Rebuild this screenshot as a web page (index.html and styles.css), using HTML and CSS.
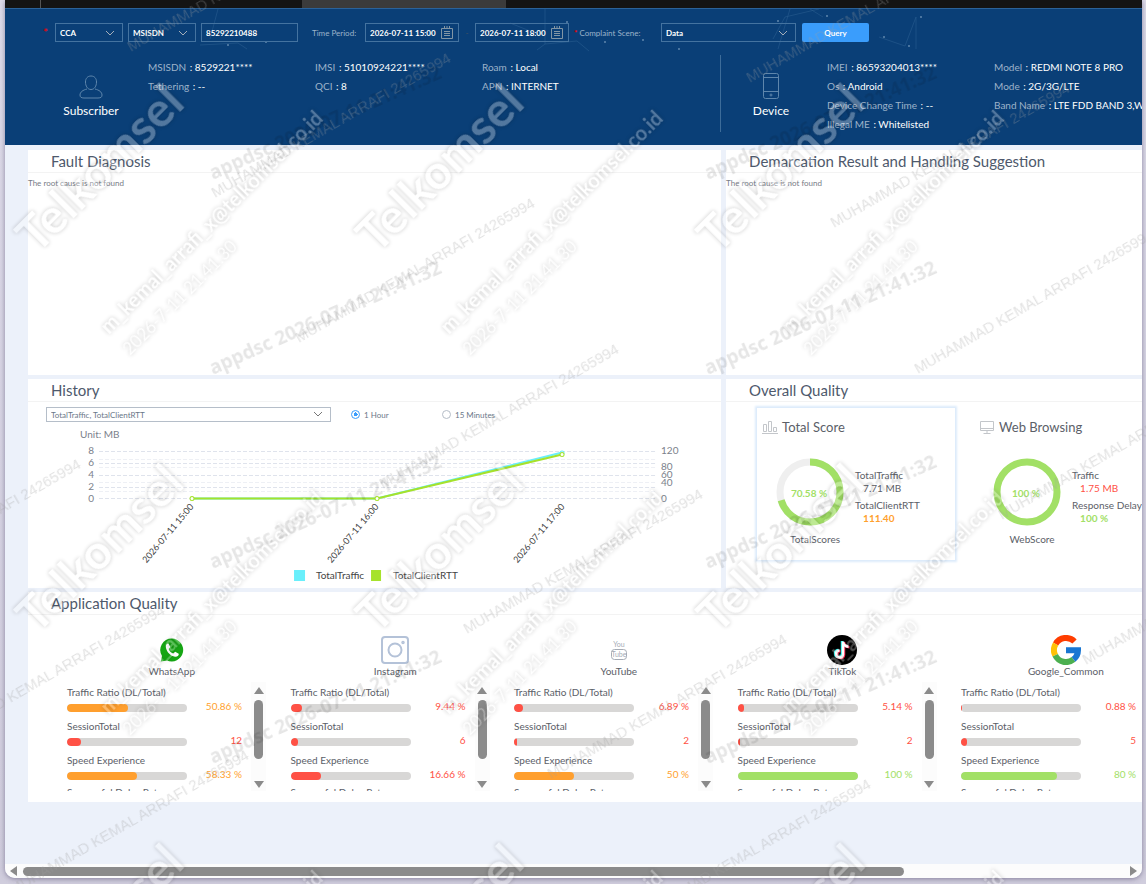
FILE: index.html
```html
<!DOCTYPE html>
<html lang="en">
<head>
    <meta charset="UTF-8">
    <meta name="viewport" content="width=device-width, initial-scale=1.0">
    <title>Customer Complaint Analysis</title>
    <link rel="stylesheet" href="styles.css">
</head>
<body>
    <div class="window">
        <div class="tabs">
            <div class="tab tab-first"></div>
            <div class="tab tab-wide"></div>
            <div class="tab tab-active"></div>
        </div>

        <div class="viewport">
            <div class="page">
                <header class="header">
                    <svg class="stars" width="940" height="50" viewBox="0 0 940 50">
                        <g fill="none" stroke="#2d6294" stroke-opacity=".5">
                            <path d="M195 36l38-2 9 6M213 0l-8 30M540 35l32-3 12 10M540 0v35l-8 6M505 14l20 8M768 30l12-22 34-8M874 28l26 9 11-29v32M818 8l-13-8M785 0l-12 40"/>
                        </g>
                        <g fill="#5f87ad">
                            <circle cx="223" cy="36" r="1"/><circle cx="261" cy="33" r="1"/>
                            <circle cx="562" cy="13" r="1"/><circle cx="600" cy="33" r="1"/><circle cx="638" cy="31" r="1"/><circle cx="674" cy="40" r="1"/>
                            <circle cx="773" cy="12" r="1"/><circle cx="822" cy="7" r="1"/><circle cx="879" cy="28" r="1"/><circle cx="904" cy="37" r="1"/><circle cx="916" cy="8" r="1"/>
                        </g>
                    </svg>

                    <form class="query">
                        <span class="star">*</span>
                        <span class="pick w68">
                            <select aria-label="Domain"><option>CCA</option></select>
                            <svg width="10" height="6" viewBox="0 0 10 6"><path d="M1 1l4 4 4-4"/></svg>
                        </span>
                        <span class="pick w68">
                            <select aria-label="Number type"><option>MSISDN</option></select>
                            <svg width="10" height="6" viewBox="0 0 10 6"><path d="M1 1l4 4 4-4"/></svg>
                        </span>
                        <input class="number" type="text" value="85292210488" aria-label="Number">
                        <label class="time-label" for="from">Time Period:</label>
                        <span class="date">
                            <input id="from" type="text" value="2026-07-11 15:00">
                            <svg width="12" height="13" viewBox="0 0 12 13"><path d="M.5 2.500h11v10H.5zM3.500 0v3M6 0v3M8.500 0v3M3 5.500h6M3 7.500h6M3 9.500h6"/></svg>
                        </span>
                        <span class="dash">-</span>
                        <span class="date">
                            <input id="to" type="text" value="2026-07-11 18:00" aria-label="End time">
                            <svg width="12" height="13" viewBox="0 0 12 13"><path d="M.5 2.500h11v10H.5zM3.500 0v3M6 0v3M8.500 0v3M3 5.500h6M3 7.500h6M3 9.500h6"/></svg>
                        </span>
                        <label class="scene-label" for="scene"><b>*</b> Complaint Scene:</label>
                        <span class="pick w135">
                            <select id="scene"><option>Data</option></select>
                            <svg width="10" height="6" viewBox="0 0 10 6"><path d="M1 1l4 4 4-4"/></svg>
                        </span>
                        <button class="query-btn" type="button">Query</button>
                    </form>

                    <div class="info">
                        <section class="info-half subscriber">
                            <div class="who">
                                <svg width="24" height="24" viewBox="0 0 24 24"><path d="M12 1c-3.500 0-5.500 2.500-5.500 6 0 4 2 7.500 5.500 7.500s5.500-3.500 5.500-7.500c0-3.500-2-6-5.500-6zM8 14c-4 1-7 3-7 6 0 2 1 3 4 3h14c3 0 4-1 4-3 0-3-3-5-7-6"/></svg>
                                <h2>Subscriber</h2>
                            </div>
                            <ul>
                                <li>MSISDN <b>: 8529221****</b></li>
                                <li>Tethering <b>: --</b></li>
                            </ul>
                            <ul>
                                <li>IMSI <b>: 51010924221****</b></li>
                                <li>QCI <b>: 8</b></li>
                            </ul>
                            <ul>
                                <li>Roam <b>: Local</b></li>
                                <li>APN <b>: INTERNET</b></li>
                            </ul>
                        </section>
                        <section class="info-half device">
                            <div class="who">
                                <svg width="16" height="26" viewBox="0 0 16 26"><rect x=".5" y=".5" width="15" height="25" rx="2"/><path d="M.5 4.500h15M.5 18.500h15"/><circle cx="8" cy="22" r="1"/></svg>
                                <h2>Device</h2>
                            </div>
                            <ul>
                                <li>IMEI <b>: 86593204013****</b></li>
                                <li>Os <b>: Android</b></li>
                                <li>Device Change Time <b>: --</b></li>
                                <li>Illegal ME <b>: Whitelisted</b></li>
                            </ul>
                            <ul>
                                <li>Model <b>: REDMI NOTE 8 PRO</b></li>
                                <li>Mode <b>: 2G/3G/LTE</b></li>
                                <li>Band Name <b>: LTE FDD BAND 3,WCDMA</b></li>
                            </ul>
                        </section>
                    </div>
                </header>

                <main class="board">
                    <section class="card diagnosis">
                        <h3>Fault Diagnosis</h3>
                        <p>The root cause is not found</p>
                    </section>
                    <section class="card diagnosis">
                        <h3>Demarcation Result and Handling Suggestion</h3>
                        <p>The root cause is not found</p>
                    </section>

                    <section class="card history">
                        <h3>History</h3>
                        <div class="filters">
                            <span class="pick light">
                                <select aria-label="Indicators"><option>TotalTraffic, TotalClientRTT</option></select>
                                <svg width="10" height="6" viewBox="0 0 10 6"><path d="M1 1l4 4 4-4"/></svg>
                            </span>
                            <label><input type="radio" name="step" checked> 1 Hour</label>
                            <label><input type="radio" name="step"> 15 Minutes</label>
                        </div>
                        <svg class="chart" viewBox="0 0 693 165">
                            <text class="axis" x="52" y="14">Unit: MB</text>
                            <g class="grid">
                                <path d="M71 27.500h557M71 39.500h557M71 51.500h557M71 63.500h557M71 74.500h557"/>
                                <path class="faint" d="M71 35.500h557M71 43.500h557M71 58.500h557M71 67.500h557"/>
                            </g>
                            <g class="axis" text-anchor="end">
                                <text x="66" y="30">8</text>
                                <text x="66" y="42">6</text>
                                <text x="66" y="54">4</text>
                                <text x="66" y="66">2</text>
                                <text x="66" y="78">0</text>
                            </g>
                            <g class="axis">
                                <text x="633" y="30">120</text>
                                <text x="633" y="46">80</text>
                                <text x="633" y="54">60</text>
                                <text x="633" y="62">40</text>
                                <text x="633" y="78">0</text>
                            </g>
                            <path class="line cyan" d="M164 74.500h185l185-46"/>
                            <circle class="dot cyan" cx="534" cy="29" r="2"/>
                            <path class="line green" d="M164 74.500h185l185-44"/>
                            <circle class="dot green" cx="164" cy="74.500" r="2"/>
                            <circle class="dot green" cx="349" cy="74.500" r="2"/>
                            <circle class="dot green" cx="534" cy="30.500" r="2"/>
                            <g class="times" text-anchor="end">
                                <text transform="translate(166 83) rotate(-50)">2026-07-11 15:00</text>
                                <text transform="translate(351 83) rotate(-50)">2026-07-11 16:00</text>
                                <text transform="translate(537 83) rotate(-50)">2026-07-11 17:00</text>
                            </g>
                            <rect x="266" y="146" width="11" height="11" fill="#69effb"/>
                            <text class="legend" x="288" y="155">TotalTraffic</text>
                            <rect x="343" y="146" width="10" height="11" fill="#a6e22c"/>
                            <text class="legend" x="365" y="155">TotalClientRTT</text>
                        </svg>
                    </section>

                    <section class="card overall">
                        <h3>Overall Quality</h3>
                        <div class="scores">
                            <article class="score selected">
                                <h4>
                                    <svg width="16" height="13" viewBox="0 0 16 13"><path d="M0 12.500h16M1.500 10.500v-7h3v7zM6.500 10.500V.5h3v10zM11.500 10.500v-4h3v4z"/></svg>
                                    Total Score
                                </h4>
                                <div class="score-body">
                                    <figure>
                                        <svg width="68" height="68" viewBox="0 0 68 68">
                                            <circle class="ring-bg" cx="34" cy="34" r="30"/>
                                            <circle class="ring" cx="34" cy="34" r="30" pathLength="100" stroke-dasharray="70.58 100" transform="rotate(-90 34 34)"/>
                                            <text x="33" y="39" text-anchor="middle">70.58 %</text>
                                        </svg>
                                        <figcaption>TotalScores</figcaption>
                                    </figure>
                                    <dl>
                                        <dt>TotalTraffic</dt>
                                        <dd>7.71 MB</dd>
                                        <dt>TotalClientRTT</dt>
                                        <dd class="orange strong">111.40</dd>
                                    </dl>
                                </div>
                            </article>
                            <article class="score">
                                <h4>
                                    <svg width="16" height="13" viewBox="0 0 16 13"><path d="M1.500.5h13v9h-13zM1.500 7.500h13M8 9.500v3M4.500 12.500h7"/></svg>
                                    Web Browsing
                                </h4>
                                <div class="score-body">
                                    <figure>
                                        <svg width="68" height="68" viewBox="0 0 68 68">
                                            <circle class="ring" cx="34" cy="34" r="30"/>
                                            <text x="33" y="39" text-anchor="middle">100 %</text>
                                        </svg>
                                        <figcaption>WebScore</figcaption>
                                    </figure>
                                    <dl>
                                        <dt>Traffic</dt>
                                        <dd class="red">1.75 MB</dd>
                                        <dt>Response Delay</dt>
                                        <dd class="green strong">100 %</dd>
                                    </dl>
                                </div>
                            </article>
                        </div>
                    </section>

                    <section class="card apps">
                        <h3>Application Quality</h3>
                        <div class="app-list">
                            <article class="app">
                                <svg width="30" height="30" viewBox="0 0 30 30">
                                    <path fill="#16a614" d="M15 3.500a11.500 11.500 0 1 1-5 22L3.800 26.500 5 21A11.500 11.500 0 0 1 15 3.500z"/>
                                    <path fill="#fff" d="M11.500 8.500c-1-.5-3 1-2.700 3.500.6 5 5 9.300 9.200 9.700 2.500.2 4.200-1.700 3.700-3l-3.500-2-2 1.800c-2.200-.8-3.800-2.500-4.500-4.500l1.600-2z"/>
                                </svg>
                                <h5>WhatsApp</h5>
                                <div class="metrics">
                                    <ul>
                                        <li>Traffic Ratio (DL/Total)<div class="row"><i class="bar"><i class="bg-orange" style="width:50.86%"></i></i><span class="orange">50.86 %</span></div></li>
                                        <li>SessionTotal<div class="row"><i class="bar"><i class="bg-red" style="width:12%"></i></i><span class="red">12</span></div></li>
                                        <li>Speed Experience<div class="row"><i class="bar"><i class="bg-orange" style="width:58.33%"></i></i><span class="orange">58.33 %</span></div></li>
                                        <li>Successful Delay Rate</li>
                                    </ul>
                                    <div class="vbar"><i class="up"></i><i class="thumb"></i><i class="down"></i></div>
                                </div>
                            </article>
                            <article class="app">
                                <svg width="30" height="30" viewBox="0 0 30 30" fill="none" stroke="#b4c2d8" stroke-width="2">
                                    <rect x="2" y="2" width="26" height="26" rx="3"/>
                                    <circle cx="15" cy="15" r="6.500"/>
                                    <circle cx="23" cy="7.500" r="1" stroke-width="1.500"/>
                                </svg>
                                <h5>Instagram</h5>
                                <div class="metrics">
                                    <ul>
                                        <li>Traffic Ratio (DL/Total)<div class="row"><i class="bar"><i class="bg-red" style="width:9.44%"></i></i><span class="red">9.44 %</span></div></li>
                                        <li>SessionTotal<div class="row"><i class="bar"><i class="bg-red" style="width:6%"></i></i><span class="red">6</span></div></li>
                                        <li>Speed Experience<div class="row"><i class="bar"><i class="bg-red" style="width:25%"></i></i><span class="red">16.66 %</span></div></li>
                                        <li>Successful Delay Rate</li>
                                    </ul>
                                    <div class="vbar"><i class="up"></i><i class="thumb"></i><i class="down"></i></div>
                                </div>
                            </article>
                            <article class="app">
                                <svg class="youtube" width="30" height="30" viewBox="0 0 30 30">
                                    <text x="15" y="12" text-anchor="middle">You</text>
                                    <rect x="7.500" y="14.500" width="15" height="10" rx="3"/>
                                    <text x="15" y="22" text-anchor="middle">Tube</text>
                                </svg>
                                <h5>YouTube</h5>
                                <div class="metrics">
                                    <ul>
                                        <li>Traffic Ratio (DL/Total)<div class="row"><i class="bar"><i class="bg-red" style="width:7.500%"></i></i><span class="red">6.89 %</span></div></li>
                                        <li>SessionTotal<div class="row"><i class="bar"><i class="bg-red" style="width:2.500%"></i></i><span class="red">2</span></div></li>
                                        <li>Speed Experience<div class="row"><i class="bar"><i class="bg-orange" style="width:50%"></i></i><span class="orange">50 %</span></div></li>
                                        <li>Successful Delay Rate</li>
                                    </ul>
                                    <div class="vbar"><i class="up"></i><i class="thumb"></i><i class="down"></i></div>
                                </div>
                            </article>
                            <article class="app">
                                <svg width="30" height="30" viewBox="0 0 30 30">
                                    <circle cx="15" cy="15" r="15" fill="#000"/>
                                    <g fill="none" stroke-width="2.500">
                                        <path stroke="#25f4ee" d="M15 6v13a3.500 3.500 0 1 1-3.500-4M15 6.500c.5 3 2.500 4.500 5.500 4.700"/>
                                        <path stroke="#fe2c55" d="M17 7v13a3.500 3.500 0 1 1-3.500-4M17 7.500c.5 3 2.500 4.500 5.500 4.700"/>
                                        <path stroke="#fff" d="M16 6.500v13a3.500 3.500 0 1 1-3.500-4M16 7c.5 3 2.500 4.500 5.500 4.700"/>
                                    </g>
                                </svg>
                                <h5>TikTok</h5>
                                <div class="metrics">
                                    <ul>
                                        <li>Traffic Ratio (DL/Total)<div class="row"><i class="bar"><i class="bg-red" style="width:5.14%"></i></i><span class="red">5.14 %</span></div></li>
                                        <li>SessionTotal<div class="row"><i class="bar"><i class="bg-red" style="width:2%"></i></i><span class="red">2</span></div></li>
                                        <li>Speed Experience<div class="row"><i class="bar"><i class="bg-green" style="width:100%"></i></i><span class="green">100 %</span></div></li>
                                        <li>Successful Delay Rate</li>
                                    </ul>
                                    <div class="vbar"><i class="up"></i><i class="thumb"></i><i class="down"></i></div>
                                </div>
                            </article>
                            <article class="app">
                                <svg width="30" height="30" viewBox="0 0 30 30">
                                    <g fill="none" stroke-width="6">
                                        <path stroke="#ff3d00" d="M4.600 9A12 12 0 0 1 23.500 6.500"/>
                                        <path stroke="#ffc107" d="M4.200 20.300A12 12 0 0 1 4.600 9"/>
                                        <path stroke="#4caf50" d="M22.500 24.400A12 12 0 0 1 4.200 20.300"/>
                                        <path stroke="#1976d2" d="M15 15.200h12A12 12 0 0 1 22.500 24.400"/>
                                    </g>
                                </svg>
                                <h5>Google_Common</h5>
                                <div class="metrics">
                                    <ul>
                                        <li>Traffic Ratio (DL/Total)<div class="row"><i class="bar"><i class="bg-red" style="width:0.88%"></i></i><span class="red">0.88 %</span></div></li>
                                        <li>SessionTotal<div class="row"><i class="bar"><i class="bg-red" style="width:5%"></i></i><span class="red">5</span></div></li>
                                        <li>Speed Experience<div class="row"><i class="bar"><i class="bg-green" style="width:80%"></i></i><span class="green">80 %</span></div></li>
                                        <li>Successful Delay Rate</li>
                                    </ul>
                                    <div class="vbar"><i class="up"></i><i class="thumb"></i><i class="down"></i></div>
                                </div>
                            </article>
                        </div>
                    </section>
                </main>
            </div>
        </div>

        <div class="hbar"><i class="left"></i><div class="rail"><i class="thumb"></i></div><i class="right"></i></div>
    </div>

    <svg class="watermark" width="1146" height="884" viewBox="0 0 1146 884">
        <g class="wm-user">
            <text transform="translate(131 52) rotate(-30)">MUHAMMAD KEMAL ARRAFI 24265994</text>
            <text transform="translate(215 198) rotate(-30)">MUHAMMAD KEMAL ARRAFI 24265994</text>
            <text transform="translate(299 343) rotate(-30)">MUHAMMAD KEMAL ARRAFI 24265994</text>
            <text transform="translate(383 489) rotate(-30)">MUHAMMAD KEMAL ARRAFI 24265994</text>
            <text transform="translate(467 634) rotate(-30)">MUHAMMAD KEMAL ARRAFI 24265994</text>
            <text transform="translate(551 779) rotate(-30)">MUHAMMAD KEMAL ARRAFI 24265994</text>
            <text transform="translate(635 924) rotate(-30)">MUHAMMAD KEMAL ARRAFI 24265994</text>
            <text transform="translate(750 83) rotate(-30)">MUHAMMAD KEMAL ARRAFI 24265994</text>
            <text transform="translate(834 228) rotate(-30)">MUHAMMAD KEMAL ARRAFI 24265994</text>
            <text transform="translate(918 374) rotate(-30)">MUHAMMAD KEMAL ARRAFI 24265994</text>
            <text transform="translate(1002 520) rotate(-30)">MUHAMMAD KEMAL ARRAFI 24265994</text>
            <text transform="translate(1086 665) rotate(-30)">MUHAMMAD KEMAL ARRAFI 24265994</text>
            <text transform="translate(-155 604) rotate(-30)">MUHAMMAD KEMAL ARRAFI 24265994</text>
            <text transform="translate(-71 750) rotate(-30)">MUHAMMAD KEMAL ARRAFI 24265994</text>
            <text transform="translate(13 895) rotate(-30)">MUHAMMAD KEMAL ARRAFI 24265994</text>
        </g>
        <g class="wm-system">
            <text transform="translate(213 180) rotate(-24)">appdsc 2026-07-11 21:41:32</text>
            <text transform="translate(213 375) rotate(-24)">appdsc 2026-07-11 21:41:32</text>
            <text transform="translate(213 569) rotate(-24)">appdsc 2026-07-11 21:41:32</text>
            <text transform="translate(213 764) rotate(-24)">appdsc 2026-07-11 21:41:32</text>
            <text transform="translate(708 180) rotate(-24)">appdsc 2026-07-11 21:41:32</text>
            <text transform="translate(708 375) rotate(-24)">appdsc 2026-07-11 21:41:32</text>
            <text transform="translate(708 569) rotate(-24)">appdsc 2026-07-11 21:41:32</text>
            <text transform="translate(708 764) rotate(-24)">appdsc 2026-07-11 21:41:32</text>
        </g>
        <g class="wm-brand">
            <text transform="translate(37 255) rotate(-45)">Telkomsel</text>
            <text transform="translate(377 255) rotate(-45)">Telkomsel</text>
            <text transform="translate(718 255) rotate(-45)">Telkomsel</text>
            <text transform="translate(37 635) rotate(-45)">Telkomsel</text>
            <text transform="translate(377 635) rotate(-45)">Telkomsel</text>
            <text transform="translate(718 635) rotate(-45)">Telkomsel</text>
            <text transform="translate(37 1015) rotate(-45)">Telkomsel</text>
            <text transform="translate(377 1015) rotate(-45)">Telkomsel</text>
            <text transform="translate(718 1015) rotate(-45)">Telkomsel</text>
        </g>
        <g class="wm-mail">
            <text transform="translate(109 335) rotate(-45)">m_kemal_arrafi_x@telkomsel.co.id</text>
            <text transform="translate(449 335) rotate(-45)">m_kemal_arrafi_x@telkomsel.co.id</text>
            <text transform="translate(790 335) rotate(-45)">m_kemal_arrafi_x@telkomsel.co.id</text>
            <text transform="translate(109 715) rotate(-45)">m_kemal_arrafi_x@telkomsel.co.id</text>
            <text transform="translate(449 715) rotate(-45)">m_kemal_arrafi_x@telkomsel.co.id</text>
            <text transform="translate(790 715) rotate(-45)">m_kemal_arrafi_x@telkomsel.co.id</text>
            <text transform="translate(109 1095) rotate(-45)">m_kemal_arrafi_x@telkomsel.co.id</text>
            <text transform="translate(449 1095) rotate(-45)">m_kemal_arrafi_x@telkomsel.co.id</text>
            <text transform="translate(790 1095) rotate(-45)">m_kemal_arrafi_x@telkomsel.co.id</text>
        </g>
        <g class="wm-date">
            <text transform="translate(130 356) rotate(-45)">2026-7-11 21.41.30</text>
            <text transform="translate(470 356) rotate(-45)">2026-7-11 21.41.30</text>
            <text transform="translate(811 356) rotate(-45)">2026-7-11 21.41.30</text>
            <text transform="translate(130 736) rotate(-45)">2026-7-11 21.41.30</text>
            <text transform="translate(470 736) rotate(-45)">2026-7-11 21.41.30</text>
            <text transform="translate(811 736) rotate(-45)">2026-7-11 21.41.30</text>
        </g>
    </svg>
</body>
</html>
```
FILE: styles.css
```css
* {
    box-sizing: border-box;
    margin: 0;
    padding: 0;
}
body {
    height: 100vh;
    padding: 0 4px 6px 5px;
    background: linear-gradient(#dddbe9, #d0cddd);
    font-family: Lato, "Liberation Sans", sans-serif;
    font-size: 10px;
    color: #5b6068;
    overflow: hidden;
}
ul {
    list-style: none;
}
input, select, button {
    font: inherit;
    color: inherit;
}

/* window */
.window {
    display: flex;
    flex-direction: column;
    height: 100%;
    background: #ecf1fa;
    border-radius: 0 0 10px 10px;
    box-shadow: 0 1px 5px rgba(60, 50, 90, 0.5);
    overflow: hidden;
}
.tabs {
    display: flex;
    flex: none;
    height: 8px;
    background: #141414;
}
.tab-first {
    width: 36px;
    border-right: 1px solid #555;
}
.tab-wide {
    width: 261px;
}
.tab-active {
    width: 204px;
    background: #3b3b3b;
}
.viewport {
    flex: 1;
    overflow: hidden;
}
.page {
    width: 126.4%;
}

/* header */
.header {
    position: relative;
    height: 137px;
    padding: 14px 23px 0;
    background: #0a3f77;
    border-top: 1px solid #2b6299;
}
.stars {
    position: absolute;
    left: 0;
    top: 0;
}
.query {
    position: relative;
    display: flex;
    align-items: center;
    gap: 5px;
    padding-left: 15px;
    color: #fff;
    font-size: 8px;
}
.query input, .query select, .query button {
    font-weight: bold;
}
.star {
    width: 7px;
    color: #f00;
    font-size: 12px;
    line-height: 10px;
}
.pick {
    position: relative;
    display: block;
    flex: none;
    height: 19px;
}
.pick select {
    width: 100%;
    height: 100%;
    padding: 0 4px;
    appearance: none;
    background: transparent;
    border: 1px solid #4473a0;
}
.pick svg {
    position: absolute;
    right: 8px;
    top: 7px;
    fill: none;
    stroke: #a5afba;
    pointer-events: none;
}
.w68 {
    width: 68px;
}
.w135 {
    width: 135px;
}
.number {
    width: 97px;
    height: 19px;
    padding: 0 4px;
    background: transparent;
    border: 1px solid #4473a0;
}
.time-label {
    width: 48px;
    margin-left: 9px;
    color: #9db3ca;
    white-space: nowrap;
}
.date {
    display: flex;
    align-items: center;
    width: 94px;
    height: 19px;
    padding: 0 5px 0 4px;
    border: 1px solid #4473a0;
}
.date input {
    flex: 1;
    min-width: 0;
    background: transparent;
    border: 0;
}
.date svg {
    flex: none;
    fill: none;
    stroke: #8296a5;
}
.dash {
    width: 6px;
    color: #46505c;
    text-align: center;
}
.scene-label {
    width: 82px;
    color: #9db3ca;
    white-space: nowrap;
}
.scene-label b {
    color: #f00;
}
.query-btn {
    width: 67px;
    height: 19px;
    margin-left: 1px;
    background: #3a9dfc;
    border: 0;
    border-radius: 2px;
    cursor: pointer;
}
.info {
    position: relative;
    display: flex;
    height: 77px;
    margin-top: 13px;
}
.info-half {
    display: flex;
    flex: 1;
    color: #9db3ca;
}
.subscriber {
    flex: none;
    width: 693px;
    border-right: 1px solid #3d6c99;
}
.info ul {
    width: 167px;
    padding-top: 3px;
}
.info li {
    height: 18px;
    margin-bottom: 1px;
    line-height: 18px;
    white-space: nowrap;
}
.info li b {
    margin-left: 1px;
    color: #fff;
    font-weight: normal;
}
.who {
    flex: none;
    display: flex;
    flex-direction: column;
    align-items: center;
    justify-content: flex-end;
    gap: 4px;
    width: 120px;
    padding: 0 0 13px 6px;
}
.device .who {
    width: 106px;
    padding: 0 6px 13px 0;
}
.who svg {
    fill: none;
    stroke: #5e86ac;
}
.who h2 {
    color: #fff;
    font-size: 12px;
    font-weight: normal;
    line-height: 16px;
}

/* board */
.board {
    display: grid;
    grid-template-columns: 1fr 1fr;
    grid-template-rows: 225px 209px 210px;
    gap: 4px 5px;
    padding: 5px 23px;
}
.card {
    min-width: 0;
    background: #fff;
}
.card h3 {
    height: 23px;
    padding-left: 23px;
    border-bottom: 1px solid #f3f3f3;
    color: #4e596c;
    font-size: 15px;
    font-weight: normal;
    line-height: 22px;
}
.diagnosis p {
    color: #777c86;
    font-size: 8px;
    line-height: 20px;
}

/* history */
.filters {
    display: flex;
    gap: 20px;
    height: 20px;
    padding: 5px 0 0 18px;
    color: #6a7788;
    font-size: 8px;
}
.filters .pick {
    width: 285px;
    height: 15px;
}
.filters select {
    border-color: #b5bec9;
}
.filters .pick svg {
    top: 4px;
    stroke: #777;
}
.filters label {
    display: flex;
    align-items: center;
    gap: 4px;
    width: 71px;
    height: 15px;
    white-space: nowrap;
}
.filters input {
    width: 9px;
    height: 9px;
    appearance: none;
    border: 1px solid #b5bdc7;
    border-radius: 50%;
}
.filters input:checked {
    background: radial-gradient(#3a9dfc 2px, #fff 2px);
    border-color: #3a9dfc;
}
.chart {
    display: block;
    width: 100%;
    padding-top: 2px;
    overflow: visible;
    font-size: 10px;
}
.axis {
    fill: #7b818b;
}
.grid path {
    stroke: #dfe3ec;
    stroke-dasharray: 4 2;
}
.grid .faint {
    stroke: #eef0f5;
}
.line {
    fill: none;
    stroke-width: 2;
}
.dot {
    fill: #fff;
    stroke-width: 1;
}
.cyan {
    stroke: #69effb;
}
.line.green, .dot.green {
    stroke: #a6e22c;
}
.times, .legend {
    fill: #444;
}
.times {
    font-size: 9px;
}

/* overall quality */
.scores {
    display: flex;
    gap: 19px;
    padding: 6px 31px;
}
.score {
    width: 198px;
    height: 152px;
    padding: 11px 0 0 5px;
}
.score.selected {
    box-shadow: 0 0 2px 2px #dcebfb;
}
.score h4 {
    display: flex;
    align-items: center;
    gap: 4px;
    font-size: 13px;
    font-weight: normal;
    line-height: 16px;
}
.score h4 svg {
    fill: none;
    stroke: #c3c6ca;
}
.score-body {
    display: flex;
    padding: 23px 0 0 14px;
    gap: 11px;
}
figure {
    width: 68px;
    text-align: center;
}
figure svg {
    display: block;
}
figure text {
    fill: #a2e066;
    font-weight: bold;
}
figcaption {
    padding-left: 10px;
    line-height: 26px;
}
.ring, .ring-bg {
    fill: none;
    stroke: #a2e066;
    stroke-width: 7;
}
.ring-bg {
    stroke: #efefef;
}
dl {
    padding-top: 10px;
    white-space: nowrap;
}
dt {
    line-height: 14px;
}
dd {
    height: 16px;
    padding-left: 8px;
    line-height: 13px;
}
.orange {
    color: #ff9f2e;
}
.red {
    color: #ff5145;
}
dd.green, .row .green {
    color: #a2e066;
}
.strong {
    font-weight: bold;
}

/* application quality */
.apps {
    grid-column: 1 / 3;
}
.app-list {
    display: grid;
    grid-template-columns: repeat(6, 1fr);
    padding: 20px 18px 0 32px;
}
.app > svg {
    display: block;
    margin: 0 auto;
}
.app h5 {
    font-size: 10px;
    font-weight: normal;
    line-height: 12px;
    text-align: center;
}
.youtube {
    fill: none;
    stroke: #a5abb5;
}
.youtube text {
    fill: #a5abb5;
    stroke: none;
    font-size: 7px;
}
.metrics {
    display: flex;
    height: 109px;
    margin-top: 5px;
    overflow: hidden;
}
.metrics ul {
    width: 191px;
    padding: 3px 9px 0 7px;
}
.metrics li {
    height: 34px;
    line-height: 15px;
}
.metrics li:last-child {
    line-height: 11px;
}
.row {
    display: flex;
    align-items: center;
    justify-content: space-between;
    height: 16px;
}
.row span {
    align-self: flex-start;
    line-height: 13px;
}
.bar {
    display: block;
    width: 120px;
    height: 8px;
    background: #d8d7d6;
    border-radius: 4px;
    overflow: hidden;
}
.bar i {
    display: block;
    height: 8px;
    border-radius: 4px;
}
.bg-orange {
    background: #ff9f2e;
}
.bg-red {
    background: #ff5145;
}
.bg-green {
    background: #a2e066;
}
.vbar {
    display: flex;
    flex-direction: column;
    align-items: center;
    width: 15px;
    padding: 5px 0 3px;
    background: #fcfcfc;
}
.vbar .thumb {
    width: 9px;
    height: 59px;
    margin: 6px 0 auto;
    background: #8b8b8b;
    border-radius: 5px;
}
.up, .down {
    border: 5px solid transparent;
}
.up {
    border-top: 0;
    border-bottom: 7px solid #8b8b8b;
}
.down {
    border-bottom: 0;
    border-top: 7px solid #8b8b8b;
}

/* bottom scroll bar */
.hbar {
    display: flex;
    flex: none;
    align-items: center;
    gap: 6px;
    height: 14px;
    padding: 0 5px;
    background: #fcfcfc;
}
.rail {
    flex: 1;
}
.rail .thumb {
    display: block;
    width: 80%;
    height: 9px;
    background: #8b8b8b;
    border-radius: 5px;
}
.left, .right {
    border: 5px solid transparent;
}
.left {
    border-left: 0;
    border-right: 7px solid #8b8b8b;
}
.right {
    border-right: 0;
    border-left: 7px solid #8b8b8b;
}

/* watermark over the whole screen */
.watermark {
    position: absolute;
    left: 0;
    top: 0;
    pointer-events: none;
}
.wm-user {
    fill: #a0a0a0;
    opacity: 0.3;
    font-family: "Liberation Sans", sans-serif;
    font-size: 15px;
}
.wm-system {
    fill: #000;
    opacity: 0.1;
    font-family: "Noto Sans", sans-serif;
    font-size: 19px;
    font-weight: bold;
}
.wm-brand, .wm-mail, .wm-date {
    fill: #fff;
    opacity: 0.3;
    filter: drop-shadow(0 0 2px rgba(0, 0, 0, 0.7));
}
.wm-brand {
    font-size: 48px;
    font-weight: bold;
}
.wm-mail {
    font-size: 20px;
    font-weight: bold;
}
.wm-date {
    font-size: 17px;
}
```
